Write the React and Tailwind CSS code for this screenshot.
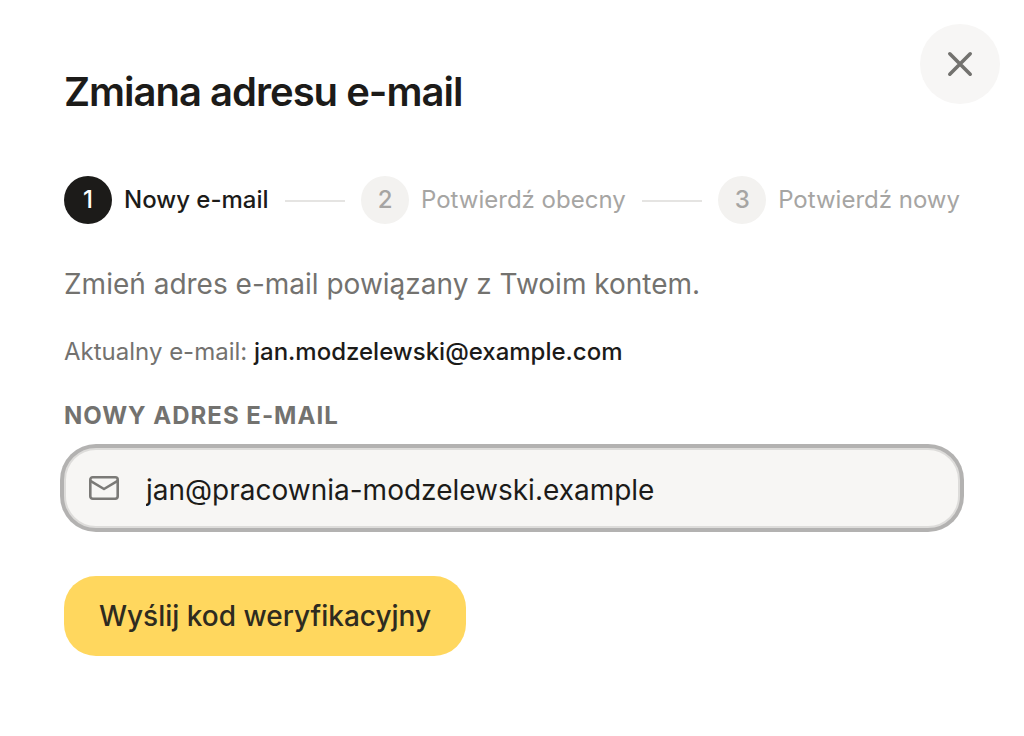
const steps = [
  { number: 1, label: "Nowy e-mail", active: true },
  { number: 2, label: "Potwierdź obecny", active: false },
  { number: 3, label: "Potwierdź nowy", active: false },
];

function Step({ number, label, active }) {
  return (
    <li className="flex shrink-0 items-center gap-3" aria-current={active ? "step" : undefined}>
      <span
        className={`flex size-12 items-center justify-center rounded-full text-2xl font-medium ${
          active ? "bg-[#1c1b19] text-white" : "bg-[#f3f2f0] text-[#a6a5a3]"
        }`}
      >
        {number}
      </span>
      <span className={`text-2xl ${active ? "font-medium text-[#1c1b19]" : "text-[#a6a5a3]"}`}>{label}</span>
    </li>
  );
}

function Connector() {
  return <li aria-hidden="true" className="mt-0.5 h-0.5 flex-1 bg-[#e5e4e2]" />;
}

function CloseIcon() {
  return (
    <svg viewBox="0 0 40 40" className="size-10" fill="none" stroke="currentColor" strokeWidth="3.6" strokeLinecap="round" aria-hidden="true">
      <path d="M9.8 9.8l20.4 20.4M30.2 9.8L9.8 30.2" />
    </svg>
  );
}

function MailIcon() {
  return (
    <svg viewBox="0 0 32 32" className="size-8 shrink-0" fill="none" stroke="currentColor" strokeWidth="2.6" strokeLinecap="round" strokeLinejoin="round" aria-hidden="true">
      <rect x="2.3" y="5.3" width="27.4" height="21.4" rx="2.4" />
      <path d="M2.8 9.2L16 17l13.2-7.8" />
    </svg>
  );
}

export default function App() {
  return (
    <main
      role="dialog"
      aria-labelledby="title"
      className="relative min-h-screen bg-white px-16 pt-16 pb-20 font-['Inter',sans-serif] text-[#1c1b19]"
    >
      <button
        type="button"
        aria-label="Zamknij"
        className="absolute top-6 right-6 flex size-20 items-center justify-center rounded-full bg-[#f7f6f5] text-[#73726f]"
      >
        <CloseIcon />
      </button>
      <h1 id="title" className="text-[40px] leading-14 font-semibold tracking-tight">
        Zmiana adresu e-mail
      </h1>
      <ol className="mt-14 flex items-center gap-4 whitespace-nowrap">
        <Step {...steps[0]} />
        <Connector />
        <Step {...steps[1]} />
        <Connector />
        <Step {...steps[2]} />
      </ol>
      <form onSubmit={(event) => event.preventDefault()}>
        <p className="mt-10 text-[28px] leading-10 text-[#73726f]">Zmień adres e-mail powiązany z Twoim kontem.</p>
        <p className="mt-8 text-2xl text-[#73726f]">
          Aktualny e-mail: <span className="font-medium text-[#1c1b19]">jan.modzelewski@example.com</span>
        </p>
        <label htmlFor="new-email" className="mt-8 block text-2xl font-bold tracking-[1px] text-[#73726f] uppercase">
          Nowy adres e-mail
        </label>
        <div className="mt-4 flex h-20 items-center rounded-[32px] border-2 border-[#dddcda] bg-[#f7f6f4] px-[22px] ring-4 ring-[#b3b2b1]">
          <span className="text-[#7b7a77]">
            <MailIcon />
          </span>
          <input
            id="new-email"
            type="email"
            defaultValue="jan@pracownia-modzelewski.example"
            className="ml-[26px] min-w-0 flex-1 bg-transparent pt-1 text-[28px] outline-none"
          />
        </div>
        <button type="submit" className="mt-12 h-20 min-w-[402px] rounded-[32px] bg-[#ffd75e] px-8 text-[28px] font-medium text-[#2e2b20]">
          Wyślij kod weryfikacyjny
        </button>
      </form>
    </main>
  );
}
